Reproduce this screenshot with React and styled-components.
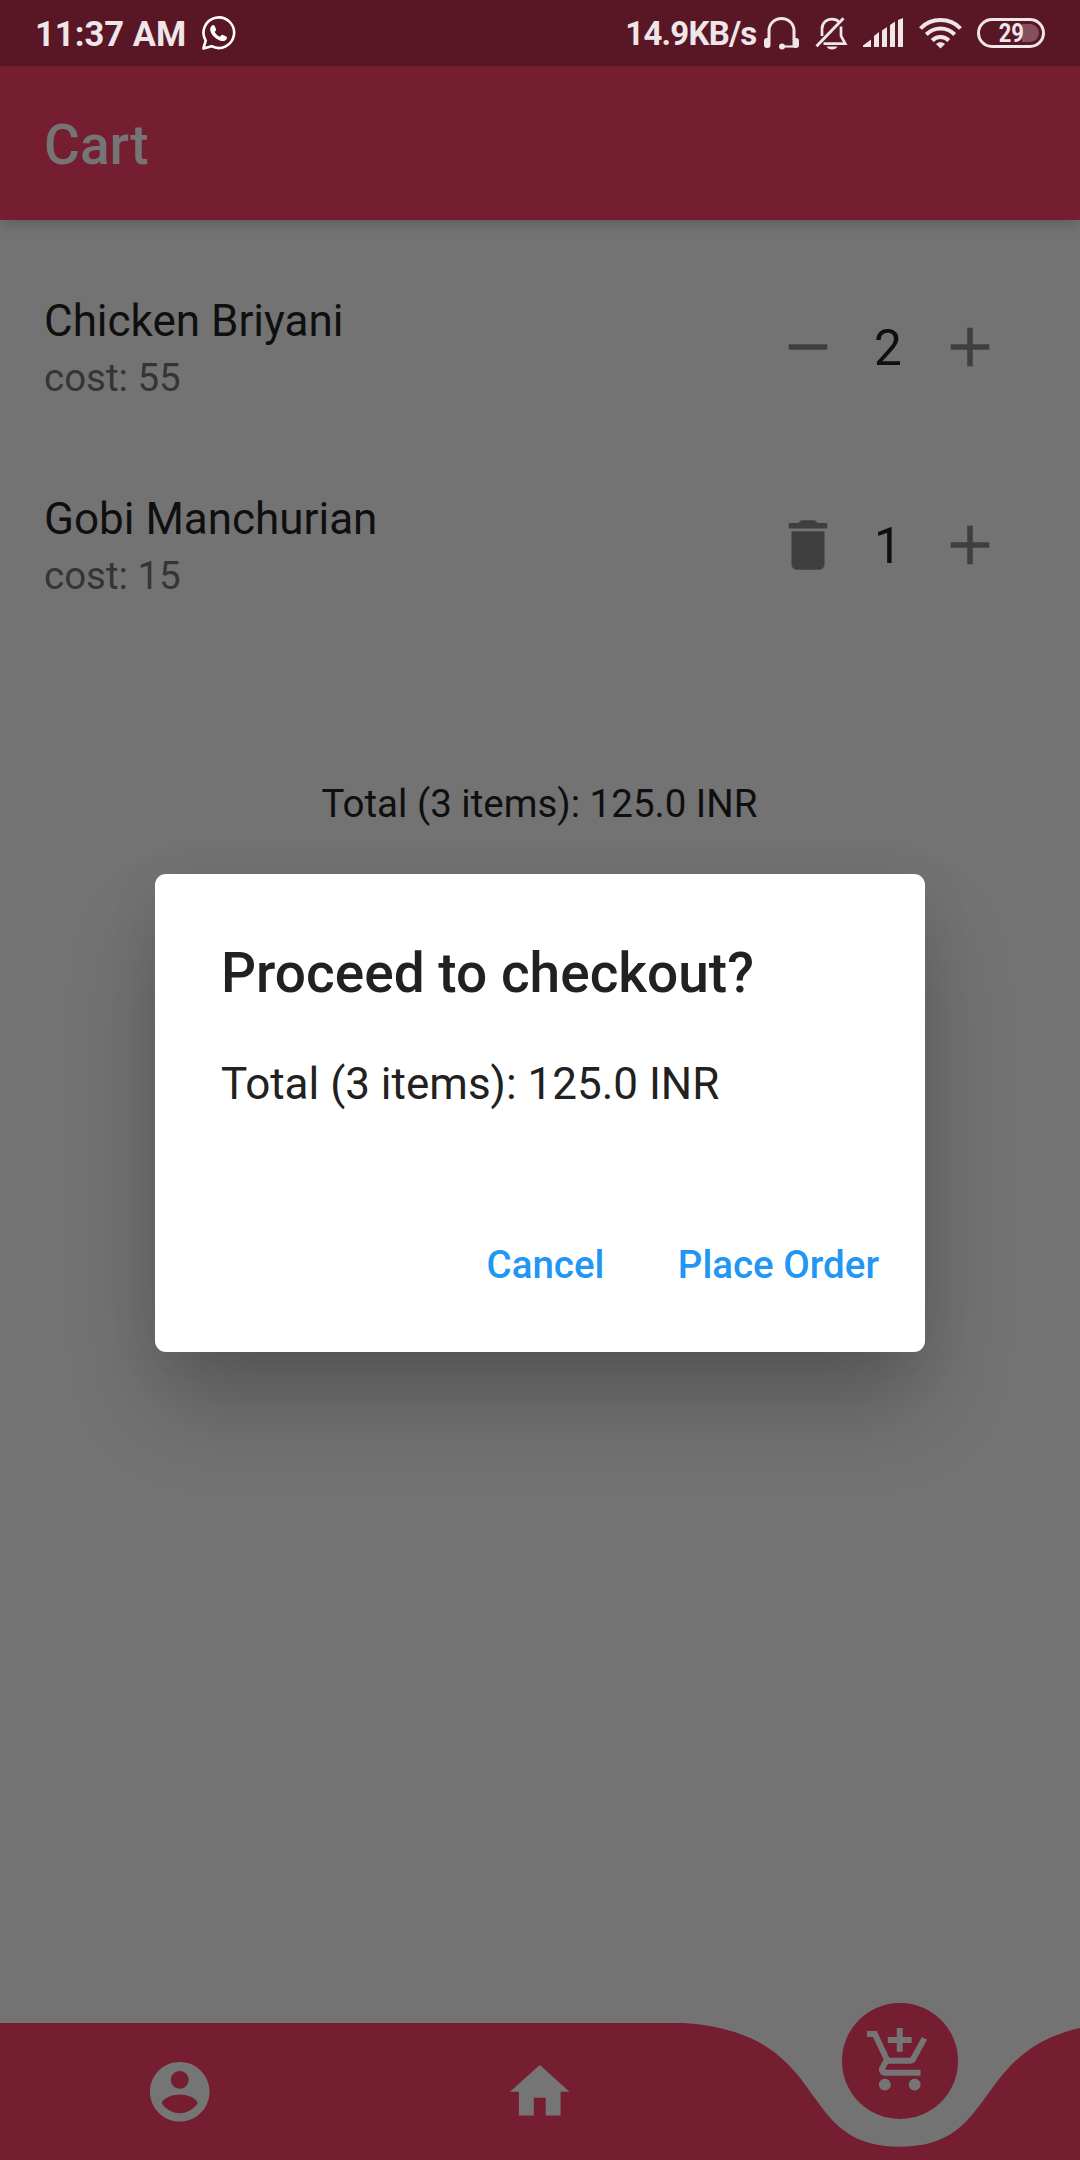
import React from "react";
import styled, { createGlobalStyle } from "styled-components";

const colors = {
  page: "#737373",
  brand: "#751e32",
  status: "#591726",
  statusInk: "#eee6e8",
  ink: "#0f0f0f",
  muted: "#353535",
  icon: "#3f3f3f",
  navIcon: "#757575",
  action: "#2196f3",
};

const GlobalStyle = createGlobalStyle`
  * { box-sizing: border-box; }
  body { margin: 0; background: ${colors.page}; font-family: Roboto, "Noto Sans", sans-serif; }
  button { font: inherit; border: 0; background: none; padding: 0; color: inherit; }
`;

const Screen = styled.div`
  position: relative;
  display: flex;
  flex-direction: column;
  width: 1080px;
  height: 2160px;
  overflow: hidden;
  background: ${colors.page};
`;

const StatusBar = styled.header`
  display: flex;
  align-items: center;
  justify-content: space-between;
  height: 66px;
  padding: 0 35px;
  flex: none;
  background: ${colors.status};
  color: ${colors.statusInk};
`;

const StatusGroup = styled.div`
  display: flex;
  align-items: center;
  height: 66px;
`;

const StatusText = styled.span`
  font-size: ${(p) => p.$size}px;
  font-weight: 700;
  line-height: 66px;
  padding-top: 2px;
  white-space: nowrap;
  letter-spacing: ${(p) => p.$spacing || 0}px;
  margin-right: ${(p) => p.$gap}px;
`;

const StatusIcon = styled.svg`
  display: block;
  flex: none;
  margin-right: ${(p) => p.$gap || 0}px;
`;

const Battery = styled.div`
  position: relative;
  display: flex;
  align-items: center;
  justify-content: center;
  width: 68px;
  height: 30px;
  border: 3px solid ${colors.statusInk};
  border-radius: 15px;
  font-size: 25px;
  font-weight: 700;
  line-height: 24px;
`;

const BatteryShade = styled.span`
  position: absolute;
  right: 3px;
  top: 3px;
  width: 17px;
  height: 18px;
  border-radius: 0 9px 9px 0;
  background: #84505c;
`;

const BatteryLevel = styled.span`
  position: relative;
  padding-top: 1px;
  transform: scaleX(0.88);
`;

const AppBar = styled.div`
  display: flex;
  align-items: center;
  height: 154px;
  flex: none;
  padding: 3px 44px 0;
  background: ${colors.brand};
  box-shadow: 0 5px 10px -3px rgba(0, 0, 0, 0.12), 0 8px 14px rgba(0, 0, 0, 0.07);
`;

const AppTitle = styled.h1`
  margin: 0;
  font-size: 55px;
  font-weight: 500;
  line-height: 64px;
  color: ${colors.navIcon};
`;

const CartList = styled.main`
  display: flex;
  flex-direction: column;
  flex: 1;
  padding-top: 27.5px;
`;

const CartRow = styled.div`
  display: flex;
  align-items: center;
  justify-content: space-between;
  height: 198px;
  padding: 0 77px 0 44px;
`;

const ItemText = styled.div`
  display: flex;
  flex-direction: column;
  gap: 6px;
  padding-top: 4px;
`;

const ItemName = styled.span`
  font-size: 44px;
  line-height: 52px;
  color: ${colors.ink};
`;

const ItemCost = styled.span`
  font-size: 38.5px;
  line-height: 50px;
  color: ${colors.muted};
`;

const Stepper = styled.div`
  display: flex;
  align-items: center;
  color: ${colors.icon};
`;

const StepButton = styled.button`
  display: flex;
  width: 66px;
  height: 66px;
`;

const Quantity = styled.span`
  width: 96px;
  padding: 2px 2px 0 0;
  text-align: center;
  font-size: 49.5px;
  line-height: 60px;
  color: ${colors.ink};
`;

const Total = styled.p`
  margin: 135px 1px 0 0;
  text-align: center;
  font-size: 38.5px;
  line-height: 50px;
  color: ${colors.ink};
`;

const NavBar = styled.nav`
  position: relative;
  display: grid;
  grid-template-columns: repeat(3, 1fr);
  justify-items: center;
  align-items: center;
  height: 137.5px;
  flex: none;
`;

const NavShape = styled.svg`
  position: absolute;
  inset: 0;
`;

const NavItem = styled.button`
  position: relative;
  display: flex;
  align-items: center;
  justify-content: center;
  width: 115.5px;
  height: 115.5px;
  border-radius: 50%;
  color: ${colors.navIcon};
  background: ${(p) => (p.$active ? colors.brand : "transparent")};
  margin-top: ${(p) => (p.$active ? -61 : 0)}px;
`;

const DialogLayer = styled.div`
  position: absolute;
  inset: 66px 0 0;
  display: flex;
  align-items: center;
  justify-content: center;
`;

const Dialog = styled.section`
  display: flex;
  flex-direction: column;
  width: 770px;
  height: 478.5px;
  padding: 66px 0 0;
  border-radius: 11px;
  background: #fff;
  color: #212121;
  box-shadow: 0 56px 92px -6px rgba(0, 0, 0, 0.24), 0 8px 60px -4px rgba(0, 0, 0, 0.07);
`;

const DialogTitle = styled.h2`
  margin: 0 66px;
  font-size: 55px;
  font-weight: 500;
  line-height: 66px;
`;

const DialogBody = styled.p`
  margin: 52px 66px 0;
  font-size: 44px;
  line-height: 52px;
`;

const DialogActions = styled.div`
  display: flex;
  justify-content: flex-end;
  gap: 73.5px;
  margin-top: 130px;
  padding-right: 46px;
`;

const DialogButton = styled.button`
  font-size: 38.5px;
  font-weight: 500;
  line-height: 50px;
  color: ${colors.action};
`;

const glyphs = {
  minus: "M19 13H5v-2h14v2z",
  plus: "M19 13h-6v6h-2v-6H5v-2h6V5h2v6h6v2z",
  trash: "M6 19c0 1.1.9 2 2 2h8c1.1 0 2-.9 2-2V7H6v12zM19 4h-3.5l-1-1h-5l-1 1H5v2h14V4z",
  account:
    "M12 2C6.48 2 2 6.48 2 12s4.48 10 10 10 10-4.48 10-10S17.52 2 12 2zm0 3c1.66 0 3 1.34 3 3s-1.34 3-3 3-3-1.34-3-3 1.34-3 3-3zm0 14.2c-2.5 0-4.71-1.28-6-3.22.03-1.99 4-3.08 6-3.08 1.99 0 5.97 1.09 6 3.08-1.29 1.94-3.5 3.22-6 3.22z",
  home: "M10 20v-6h4v6h5v-8h3L12 3 2 12h3v8z",
  cart:
    "M11 9h2V6h3V4h-3V1h-2v3H8v2h3v3zm-4 9c-1.1 0-1.99.9-1.99 2S5.9 22 7 22s2-.9 2-2-.9-2-2-2zm10 0c-1.1 0-1.99.9-1.99 2s.89 2 1.99 2 2-.9 2-2-.9-2-2-2zm-9.83-3.25l.03-.12.9-1.63h7.45c.75 0 1.41-.41 1.75-1.03l3.86-7.01L19.42 4h-.01l-1.1 2-2.76 5H8.53l-.13-.27L6.16 6l-.95-2-.94-2H1v2h2l3.6 7.59-1.35 2.45c-.16.28-.25.61-.25.96 0 1.1.9 2 2 2h12v-2H7.42c-.13 0-.25-.11-.25-.25z",
};

function Glyph({ name, size }) {
  return (
    <svg width={size} height={size} viewBox="0 0 24 24" fill="currentColor" aria-hidden="true">
      <path d={glyphs[name]} />
    </svg>
  );
}

const items = [
  { name: "Chicken Briyani", cost: 55, count: 2 },
  { name: "Gobi Manchurian", cost: 15, count: 1 },
];

const navItems = ["account", "home", "cart"];

function WhatsAppIcon() {
  return (
    <StatusIcon width="34" height="34" viewBox="0 0 34 34" fill="none">
      <path d="M1.4 32.4 L3.7 24.6 A15.3 15.3 0 1 1 9.6 30.2 Z" stroke="#fff" strokeWidth="2.6" strokeLinejoin="round" />
      <path
        d="M10 9.6c.8-.8 2-.8 2.5.2l1.5 3.2c.3.7.1 1.2-.4 1.8l-.9 1.1c1.2 2.2 3 3.9 5.3 4.9l1.3-1.5c.5-.6 1-.7 1.7-.4l3.2 1.6c.8.4.9 1 .6 1.9-.8 2.1-3.2 3.2-5.6 2.5-5.3-1.5-9.4-5.5-10.8-9.900-.6-2 .2-4.100 1.600-5.400z"
        fill="#fff"
      />
    </StatusIcon>
  );
}

function HeadsetIcon() {
  return (
    <StatusIcon width="35" height="33" viewBox="0.5 0 35 33" $gap={16} fill="none" stroke="currentColor">
      <path d="M5.5 23V13.5a12.5 12 0 0 1 25 0V23" strokeWidth="3" />
      <rect x="0.5" y="21" width="6.5" height="10" rx="3" fill="currentColor" stroke="none" />
      <rect x="29" y="21" width="6.5" height="10" rx="3" fill="currentColor" stroke="none" />
      <path d="M18 29.5H31" strokeWidth="2.2" />
      <circle cx="18.5" cy="29.5" r="3" fill="currentColor" stroke="none" />
    </StatusIcon>
  );
}

function BellOffIcon() {
  return (
    <StatusIcon width="33" height="33" viewBox="0 0 33 33" $gap={15} fill="none" stroke="currentColor" strokeWidth="2.7">
      <path d="M7 19V12c0-6 4.5-9.8 10-9.8 3 0 5.5 1 7.2 3" />
      <path d="M26 9.5v9.5l4.2 7.6H8.5" />
      <path d="M1.5 29.3 28.5 1.3" strokeWidth="2.9" />
      <path d="M11.5 29.5h11c-1 2-3 3-5.5 3s-4.5-1-5.5-3z" fill="currentColor" stroke="none" />
    </StatusIcon>
  );
}

function SignalIcon() {
  return (
    <StatusIcon width="41" height="30" viewBox="0 0 41 30" $gap={15} fill="currentColor">
      <path d="M0 29v-1.500l8-6V29zM11 29V18l5-4V29zM19 29V12.500l5-3.500V29zM27 29V7l5-3.500V29zM35 29V2l5-2V29z" />
    </StatusIcon>
  );
}

function WifiIcon() {
  return (
    <StatusIcon width="43" height="31" viewBox="0 0 43 31" $gap={15} fill="none" stroke="currentColor" strokeWidth="4">
      <path d="M1.5 10.5C12-.7 31-.7 41.5 10.5" />
      <path d="M7.3 16.5c8-8 20.4-8 28.4 0" />
      <path d="M13.2 22.5c4.7-4.7 11.9-4.7 16.6 0" />
      <path d="M21.5 30.5l-4.5-4.5c2.500-2.300 6.500-2.300 9 0z" fill="currentColor" stroke="none" />
    </StatusIcon>
  );
}

export default function App() {
  return (
    <>
      <GlobalStyle />
      <Screen>
        <StatusBar>
          <StatusGroup>
            <StatusText $size={34.5} $gap={16} $spacing={0.05}>11:37 AM</StatusText>
            <WhatsAppIcon />
          </StatusGroup>
          <StatusGroup>
            <StatusText $size={33} $gap={7.5} $spacing={-0.8}>14.9KB/s</StatusText>
            <HeadsetIcon />
            <BellOffIcon />
            <SignalIcon />
            <WifiIcon />
            <Battery>
              <BatteryShade />
              <BatteryLevel>29</BatteryLevel>
            </Battery>
          </StatusGroup>
        </StatusBar>
        <AppBar>
          <AppTitle>Cart</AppTitle>
        </AppBar>
        <CartList>
          {items.map((item) => (
            <CartRow key={item.name}>
              <ItemText>
                <ItemName>{item.name}</ItemName>
                <ItemCost>cost: {item.cost}</ItemCost>
              </ItemText>
              <Stepper>
                <StepButton aria-label="Remove">
                  <Glyph name={item.count > 1 ? "minus" : "trash"} size={66} />
                </StepButton>
                <Quantity>{item.count}</Quantity>
                <StepButton aria-label="Add">
                  <Glyph name="plus" size={66} />
                </StepButton>
              </Stepper>
            </CartRow>
          ))}
          <Total>Total (3 items): 125.0 INR</Total>
        </CartList>
        <NavBar>
          <NavShape width="1080" height="137.5" viewBox="0 0 1080 137.5">
            <path
              d="M0 0H684C835.2 10.3 792 123.75 900 123.75C1008 123.75 964.8 10.3 1116 0V138H0Z"
              fill={colors.brand}
            />
          </NavShape>
          {navItems.map((name) => (
            <NavItem key={name} $active={name === "cart"} aria-label={name}>
              <Glyph name={name} size={71.5} />
            </NavItem>
          ))}
        </NavBar>
        <DialogLayer>
          <Dialog role="dialog">
            <DialogTitle>Proceed to checkout?</DialogTitle>
            <DialogBody>Total (3 items): 125.0 INR</DialogBody>
            <DialogActions>
              <DialogButton>Cancel</DialogButton>
              <DialogButton>Place Order</DialogButton>
            </DialogActions>
          </Dialog>
        </DialogLayer>
      </Screen>
    </>
  );
}
